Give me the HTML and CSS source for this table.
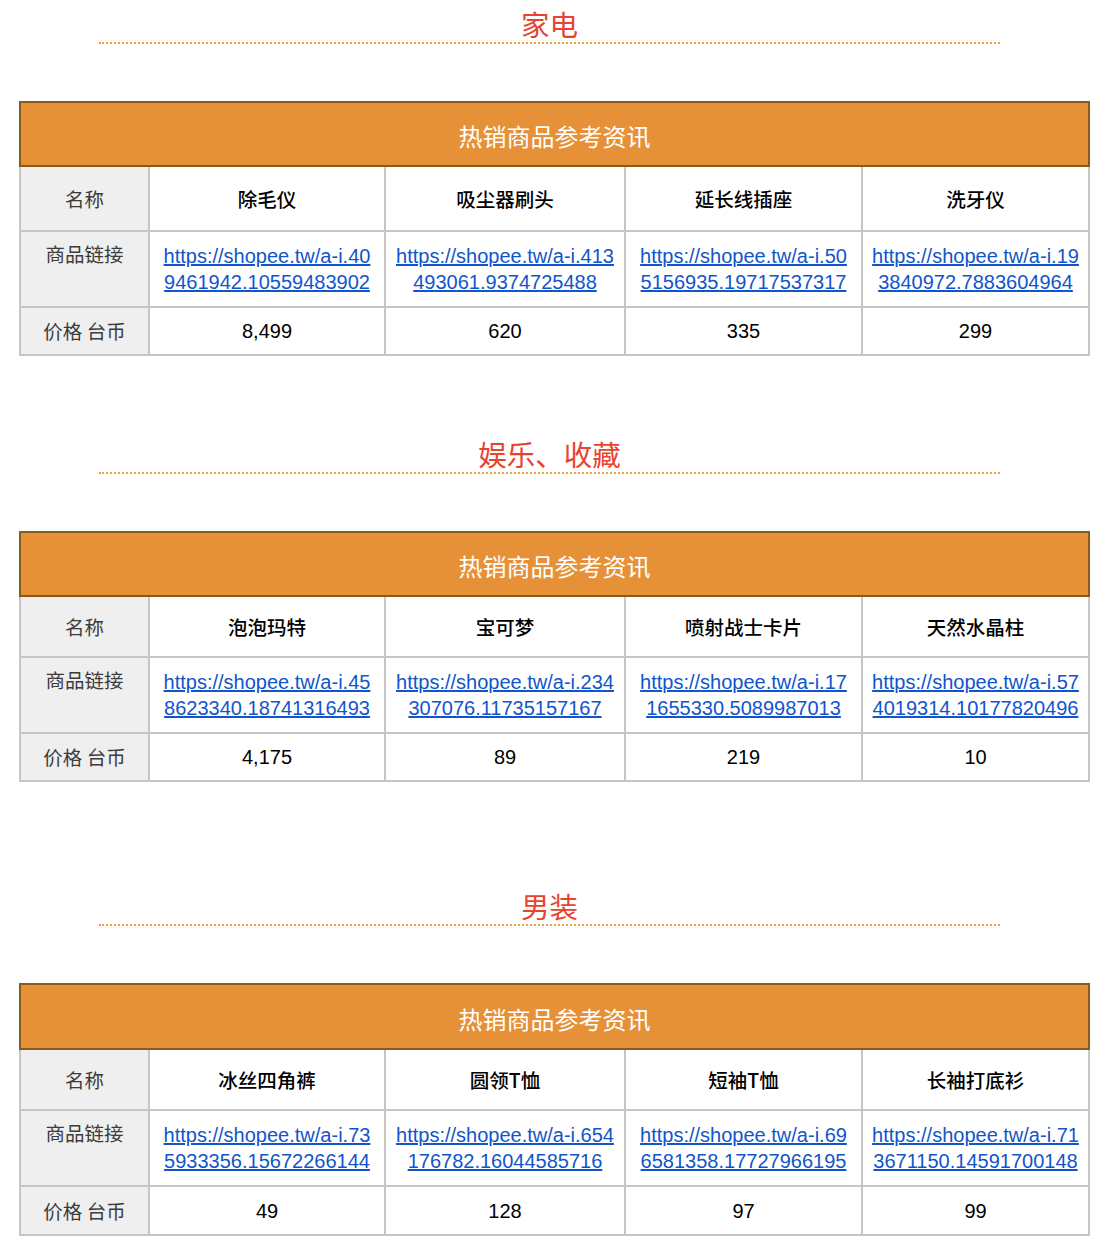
FILE: index.html
```html
<!DOCTYPE html>
<html lang="zh">
<head>
<meta charset="utf-8">
<title>热销商品参考资讯</title>
<link rel="stylesheet" href="styles.css">
</head>
<body>
<div class="page">

  <section class="section s1">
    <h2 class="cat">家电</h2>
    <table class="goods">
      <colgroup><col class="c0"><col class="c1"><col class="c2"><col class="c3"><col class="c4"></colgroup>
      <tr class="head"><th colspan="5">热销商品参考资讯</th></tr>
      <tr class="r-name"><td class="lab">名称</td><td class="nm">除毛仪</td><td class="nm">吸尘器刷头</td><td class="nm">延长线插座</td><td class="nm">洗牙仪</td></tr>
      <tr class="r-link"><td class="lab top">商品链接</td>
        <td><a href="#">https://shopee.tw/a-i.40<br>9461942.10559483902</a></td>
        <td><a href="#">https://shopee.tw/a-i.413<br>493061.9374725488</a></td>
        <td><a href="#">https://shopee.tw/a-i.50<br>5156935.19717537317</a></td>
        <td><a href="#">https://shopee.tw/a-i.19<br>3840972.7883604964</a></td></tr>
      <tr class="r-price"><td class="lab">价格 台币</td><td>8,499</td><td>620</td><td>335</td><td>299</td></tr>
    </table>
  </section>

  <section class="section s2">
    <h2 class="cat">娱乐、收藏</h2>
    <table class="goods">
      <colgroup><col class="c0"><col class="c1"><col class="c2"><col class="c3"><col class="c4"></colgroup>
      <tr class="head"><th colspan="5">热销商品参考资讯</th></tr>
      <tr class="r-name"><td class="lab">名称</td><td class="nm">泡泡玛特</td><td class="nm">宝可梦</td><td class="nm">喷射战士卡片</td><td class="nm">天然水晶柱</td></tr>
      <tr class="r-link"><td class="lab top">商品链接</td>
        <td><a href="#">https://shopee.tw/a-i.45<br>8623340.18741316493</a></td>
        <td><a href="#">https://shopee.tw/a-i.234<br>307076.11735157167</a></td>
        <td><a href="#">https://shopee.tw/a-i.17<br>1655330.5089987013</a></td>
        <td><a href="#">https://shopee.tw/a-i.57<br>4019314.10177820496</a></td></tr>
      <tr class="r-price"><td class="lab">价格 台币</td><td>4,175</td><td>89</td><td>219</td><td>10</td></tr>
    </table>
  </section>

  <section class="section s3">
    <h2 class="cat">男装</h2>
    <table class="goods">
      <colgroup><col class="c0"><col class="c1"><col class="c2"><col class="c3"><col class="c4"></colgroup>
      <tr class="head"><th colspan="5">热销商品参考资讯</th></tr>
      <tr class="r-name"><td class="lab">名称</td><td class="nm">冰丝四角裤</td><td class="nm">圆领T恤</td><td class="nm">短袖T恤</td><td class="nm">长袖打底衫</td></tr>
      <tr class="r-link"><td class="lab top">商品链接</td>
        <td><a href="#">https://shopee.tw/a-i.73<br>5933356.15672266144</a></td>
        <td><a href="#">https://shopee.tw/a-i.654<br>176782.16044585716</a></td>
        <td><a href="#">https://shopee.tw/a-i.69<br>6581358.17727966195</a></td>
        <td><a href="#">https://shopee.tw/a-i.71<br>3671150.14591700148</a></td></tr>
      <tr class="r-price"><td class="lab">价格 台币</td><td>49</td><td>128</td><td>97</td><td>99</td></tr>
    </table>
  </section>

</div>
</body>
</html>
```

FILE: styles.css
```css
html, body {
  margin: 0;
  padding: 0;
  background: #ffffff;
}

body {
  font-family: "Liberation Sans", "Noto Sans CJK SC", sans-serif;
  color: #000000;
}

.page {
  padding-top: 4px;
  padding-left: 19px;
}

.section.s2 { margin-top: 78px; }
.section.s3 { margin-top: 104px; }

.cat {
  margin: 0 0 0 80px;
  width: 901px;
  height: 38px;
  line-height: 39px;
  text-align: center;
  font-size: 28.5px;
  font-weight: normal;
  color: #e8432e;
  font-family: "Noto Sans CJK SC", sans-serif;
  border-bottom: 2px dotted #f2a43a;
}

.goods {
  margin-top: 57px;
  width: 1069px;
  table-layout: fixed;
  border-collapse: collapse;
}

.c0 { width: 129px; }
.c1 { width: 236px; }
.c2 { width: 240px; }
.c3 { width: 237px; }
.c4 { width: 227px; }

.goods td,
.goods th {
  border: 2px solid #c6c6c6;
  padding: 0;
  text-align: center;
  vertical-align: middle;
  font-size: 20px;
  line-height: 26px;
  white-space: nowrap;
  overflow: hidden;
}

.goods .head th {
  height: 58px;
  padding-top: 4px;
  background: #e69138;
  border: 2px solid #8a5a1c;
  color: #ffffff;
  font-weight: normal;
  font-size: 24px;
  font-family: "Noto Sans CJK SC", sans-serif;
}

.s3 .goods .head th { height: 59px; }

.r-name td { height: 59px; }
.s1 .r-name td { height: 63px; }
.r-link td { height: 74px; }
.r-price td { height: 46px; }
.s3 .r-price td { height: 47px; }

.goods td.lab {
  background: #efefef;
  color: #3c3c3c;
  font-size: 19.5px;
  font-family: "Noto Sans CJK SC", sans-serif;
}

.goods .r-link td.lab.top {
  vertical-align: top;
  height: 65px;
  padding-top: 9px;
}

.goods td.nm {
  font-size: 19.5px;
  font-weight: 500;
  font-family: "Noto Sans CJK SC", sans-serif;
}

.goods a {
  color: #1155cc;
  text-decoration: underline;
}
```
